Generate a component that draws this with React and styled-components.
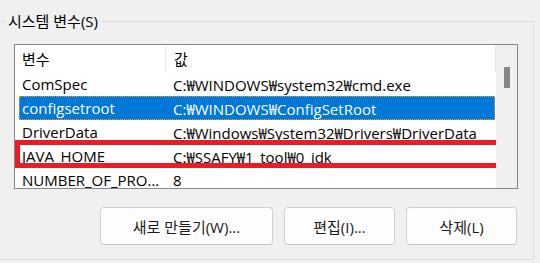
import React from "react";
import styled, { createGlobalStyle } from "styled-components";

const GlobalStyle = createGlobalStyle`
  html, body {
    margin: 0;
    padding: 0;
    background: #f0f0f0;
    overflow: hidden;
  }
  body {
    font-family: "Open Sans", "Noto Sans CJK KR", sans-serif;
    font-size: 15px;
    color: #000;
  }
`;

const variables = [
  { name: "ComSpec", value: "C:₩WINDOWS₩system32₩cmd.exe" },
  { name: "configsetroot", value: "C:₩WINDOWS₩ConfigSetRoot", selected: true },
  { name: "DriverData", value: "C:₩Windows₩System32₩Drivers₩DriverData" },
  { name: "JAVA_HOME", value: "C:₩SSAFY₩1_tool₩0_jdk", marked: true },
  { name: "NUMBER_OF_PROCESSORS", value: "8" },
];

const SystemVariables = () => {
  return (
    <Frame>
      <Legend>시스템 변수(S)</Legend>
      <ListView>
        <Table>
          <Header>
            <HeadCell $first>변수</HeadCell>
            <HeadCell>값</HeadCell>
          </Header>
          {variables.map((v) => (
            <Row key={v.name} $selected={v.selected}>
              <NameCell>{v.name}</NameCell>
              <ValueCell>{v.value}</ValueCell>
              {v.marked && <Mark />}
            </Row>
          ))}
        </Table>
        <ScrollBar>
          <Thumb />
        </ScrollBar>
      </ListView>
      <Buttons>
        <Button $width={173}>새로 만들기(W)...</Button>
        <Button $width={111}>편집(I)...</Button>
        <Button $width={111}>삭제(L)</Button>
      </Buttons>
    </Frame>
  );
};

const Frame = styled.div`
  box-sizing: border-box;
  width: 544px;
  height: 239px;
  margin: 21px 0 0 -10px;
  padding: 0 15px 0 23px;
  border: 1px solid #dcdcdc;
  display: flex;
  flex-direction: column;
`;

const Legend = styled.div`
  align-self: flex-start;
  margin: -11px 0 0 -9px;
  padding: 0 3px;
  height: 20px;
  line-height: 20px;
  background: #f0f0f0;
  white-space: nowrap;
`;

const ListView = styled.div`
  box-sizing: border-box;
  width: 504px;
  height: 145px;
  margin-top: 13px;
  border: 1px solid #828790;
  background: #fff;
  display: flex;
  overflow: hidden;
`;

const Table = styled.div`
  position: relative;
  flex: 1;
  display: flex;
  flex-direction: column;
  overflow: hidden;
`;

const Header = styled.div`
  display: flex;
  height: 27px;
  flex-shrink: 0;
  align-items: center;
`;

const HeadCell = styled.div`
  box-sizing: border-box;
  height: 26px;
  line-height: 26px;
  padding-left: ${(p) => (p.$first ? "7px" : "8px")};
  width: ${(p) => (p.$first ? "151px" : "330px")};
  border-right: 1px solid #e5e5e5;
`;

const Row = styled.div`
  position: relative;
  display: flex;
  height: 24px;
  flex-shrink: 0;
  align-items: center;
  margin: 0 1px 0 4px;
  color: ${(p) => (p.$selected ? "#fff" : "#000")};
  background: ${(p) => (p.$selected ? "#0078d7" : "transparent")};
  outline: ${(p) => (p.$selected ? "1px dotted #f0a030" : "none")};
  outline-offset: -1px;
`;

const NameCell = styled.div`
  box-sizing: border-box;
  width: 147px;
  padding: 0 3px 0 3px;
  white-space: nowrap;
  overflow: hidden;
  text-overflow: ellipsis;
`;

const ValueCell = styled.div`
  padding-left: 7px;
  white-space: nowrap;
`;

const Mark = styled.div`
  position: absolute;
  left: -4px;
  top: -4px;
  width: 486px;
  height: 28px;
  box-sizing: border-box;
  border: 5px solid #ed1c24;
  pointer-events: none;
`;

const ScrollBar = styled.div`
  width: 21px;
  flex-shrink: 0;
  background: #f0f0f0;
  display: flex;
  justify-content: center;
  padding-top: 22px;
  box-sizing: border-box;
`;

const Thumb = styled.div`
  width: 6px;
  height: 21px;
  background: #858585;
`;

const Buttons = styled.div`
  display: flex;
  justify-content: flex-end;
  gap: 11px;
  margin-top: 18px;
  width: 503px;
`;

const Button = styled.button`
  box-sizing: border-box;
  width: ${(p) => p.$width}px;
  height: 38px;
  border: 1px solid #d0d0d0;
  border-bottom-color: #c4c4c4;
  border-radius: 4px;
  background: #fdfdfd;
  font-family: inherit;
  font-size: 15px;
  color: #1a1a1a;
  padding: 0;
`;

export default function App() {
  return (
    <>
      <GlobalStyle />
      <SystemVariables />
    </>
  );
}
